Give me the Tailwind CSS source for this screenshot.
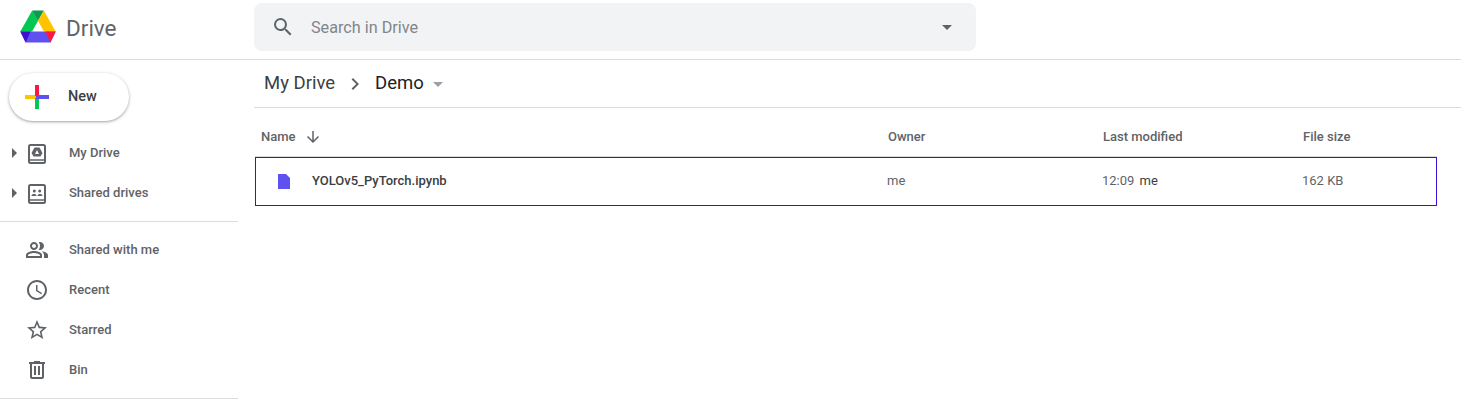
<!DOCTYPE html>
<html lang="en">
<head>
    <meta charset="UTF-8"/>
    <title>Demo - Google Drive</title>
    <script src="https://cdn.jsdelivr.net/npm/@tailwindcss/browser@4"></script>
</head>
<body class="bg-white font-[Roboto,sans-serif] w-[1461px] h-[413px] overflow-hidden">

    <!-- Top bar -->
    <header class="h-[60px] border-b border-[#dadce0] flex">
        <div class="w-[254px] flex items-center pl-[20px] pb-[6px]">
            <svg class="w-[36px] h-[33px]" viewBox="0 0 36 33">
                <path d="M12.2 0.5L0.3 21.5H12L18 11Z" fill="#00c853"/>
                <path d="M12.2 0.5H23.8L18 11L15 6Z" fill="#0c9a4e"/>
                <path d="M23.8 0.5L35.7 21.5H24L18 11Z" fill="#ffc400"/>
                <path d="M0.3 21.5H35.7L30.5 32.5H5.5Z" fill="#5f50f0"/>
                <path d="M0.3 21.5H10.5L5.8 32.5Z" fill="#3f10d0"/>
                <path d="M25.5 21.5H35.7L30.3 32.5Z" fill="#ff1744"/>
            </svg>
            <span class="ml-[10px] text-[22.5px] text-[#5f6368] leading-none mt-[4px]">Drive</span>
        </div>
        <div class="w-[722px] h-[48px] mt-[3px] bg-[#f1f3f4] rounded-[8px] flex items-center">
            <svg class="w-[24px] h-[24px] ml-[17px] text-[#5f6368]" viewBox="0 0 24 24" fill="currentColor">
                <path d="M15.5 14h-.79l-.28-.27A6.47 6.47 0 0 0 16 9.5 6.5 6.5 0 1 0 9.500 16c1.61 0 3.09-.59 4.23-1.57l.27.28v.79l5 4.99L20.49 19l-4.99-5zm-6 0C7.01 14 5 11.99 5 9.5S7.01 5 9.5 5 14 7.01 14 9.5 11.99 14 9.5 14z"/>
            </svg>
            <span class="ml-[16px] text-[16.2px] text-[#80868b] mt-[2px]">Search in Drive</span>
            <div class="ml-auto mr-[24px] w-0 h-0 border-x-[5px] border-x-transparent border-t-[5px] border-t-[#5f6368]"></div>
        </div>
    </header>

    <div class="flex">
        <!-- Sidebar -->
        <aside class="w-[238px] shrink-0">
            <div class="pl-[9px] pt-[13px]">
                <button class="w-[120px] h-[48px] rounded-full bg-white shadow-[0_1px_2px_0_rgba(60,64,67,0.3),0_1px_3px_1px_rgba(60,64,67,0.15)] flex items-center">
                    <svg class="w-[24px] h-[24px] ml-[16px]" viewBox="0 0 24 24">
                        <rect x="0" y="10" width="11" height="4" fill="#ffc400"/>
                        <rect x="10" y="0" width="4" height="11" fill="#ff1744"/>
                        <rect x="10" y="13" width="4" height="11" fill="#00c853"/>
                        <rect x="11" y="10" width="13" height="4" fill="#5f50f0"/>
                    </svg>
                    <span class="ml-[19px] text-[14.500px] font-medium text-[#3c4043] mb-[1px]">New</span>
                </button>
            </div>

            <nav class="mt-[12px]">
                <div class="h-[40px] flex items-center text-[13px] font-medium text-[#5f6368]">
                    <div class="ml-[12px] w-0 h-0 border-y-[5px] border-y-transparent border-l-[5px] border-l-[#5f6368]"></div>
                    <svg class="w-[24px] h-[24px] ml-[8px]" viewBox="0 0 24 24" fill="none">
                        <rect x="4" y="4" width="16" height="18" rx="1.500" stroke="#5f6368" stroke-width="2"/>
                        <path d="M4 19H20" stroke="#5f6368" stroke-width="1.500"/>
                        <path fill-rule="evenodd" d="M9.500 6.500H14.500L17.500 12L15.500 15.500H8.500L6.500 12ZM12 9L10 13H14Z" fill="#5f6368"/>
                    </svg>
                    <span class="ml-[20px]">My Drive</span>
                </div>
                <div class="h-[40px] flex items-center text-[13px] font-medium text-[#5f6368]">
                    <div class="ml-[12px] w-0 h-0 border-y-[5px] border-y-transparent border-l-[5px] border-l-[#5f6368]"></div>
                    <svg class="w-[24px] h-[24px] ml-[8px]" viewBox="0 0 24 24" fill="none">
                        <rect x="4" y="4" width="16" height="18" rx="1.500" stroke="#5f6368" stroke-width="2"/>
                        <path d="M4 19H20" stroke="#5f6368" stroke-width="1.500"/>
                        <circle cx="9.300" cy="10" r="1.500" fill="#5f6368"/>
                        <circle cx="14.700" cy="10" r="1.500" fill="#5f6368"/>
                        <path d="M6.500 15C6.500 12.400 11.500 12.400 11.500 15ZM12.500 15C12.500 12.400 17.500 12.400 17.500 15Z" fill="#5f6368"/>
                    </svg>
                    <span class="ml-[20px]">Shared drives</span>
                </div>
                <div class="border-t border-[#dadce0] mt-[8px] mb-[8px]"></div>

                <div class="h-[40px] flex items-center text-[13px] font-medium text-[#5f6368]">
                    <svg class="w-[24px] h-[24px] ml-[25px]" viewBox="0 0 24 24" fill="#5f6368">
                        <path d="M15 8c0-1.420-.5-2.730-1.330-3.760.42-.14.86-.24 1.330-.24 2.210 0 4 1.790 4 4s-1.790 4-4 4c-.43 0-.84-.09-1.230-.21-.03-.01-.06-.02-.1-.03A5.980 5.980 0 0 0 15 8zm1.660 5.130C18.030 14.060 19 15.320 19 17v3h4v-3c0-2.180-3.580-3.470-6.340-3.870zM9 6c-1.100 0-2 .9-2 2s.9 2 2 2 2-.9 2-2-.9-2-2-2m0 9c-2.700 0-5.800 1.290-6 2.010V18h12v-1c-.2-.71-3.300-2-6-2M9 4c2.210 0 4 1.790 4 4s-1.790 4-4 4-4-1.790-4-4 1.790-4 4-4zm0 9c2.670 0 8 1.340 8 4v3H1v-3c0-2.660 5.330-4 8-4z"/>
                    </svg>
                    <span class="ml-[20px]">Shared with me</span>
                </div>
                <div class="h-[40px] flex items-center text-[13px] font-medium text-[#5f6368]">
                    <svg class="w-[24px] h-[24px] ml-[25px]" viewBox="0 0 24 24" fill="#5f6368">
                        <path d="M11.990 2C6.470 2 2 6.480 2 12s4.470 10 9.990 10C17.520 22 22 17.520 22 12S17.520 2 11.990 2zM12 20c-4.420 0-8-3.580-8-8s3.580-8 8-8 8 3.580 8 8-3.580 8-8 8zm.5-13H11v6l5.250 3.150.75-1.230-4.500-2.670z"/>
                    </svg>
                    <span class="ml-[20px]">Recent</span>
                </div>
                <div class="h-[40px] flex items-center text-[13px] font-medium text-[#5f6368]">
                    <svg class="w-[24px] h-[24px] ml-[25px]" viewBox="0 0 24 24" fill="#5f6368">
                        <path d="M22 9.240l-7.190-.62L12 2 9.190 8.630 2 9.240l5.460 4.730L5.820 21 12 17.270 18.180 21l-1.630-7.030L22 9.240zM12 15.400l-3.760 2.270 1-4.280-3.320-2.880 4.380-.38L12 6.100l1.710 4.040 4.380.38-3.320 2.880 1 4.280L12 15.400z"/>
                    </svg>
                    <span class="ml-[20px]">Starred</span>
                </div>
                <div class="h-[40px] flex items-center text-[13px] font-medium text-[#5f6368]">
                    <svg class="w-[24px] h-[24px] ml-[25px]" viewBox="0 0 24 24" fill="#5f6368">
                        <path d="M15 4V3H9v1H4v2h1v13c0 1.100.9 2 2 2h10c1.100 0 2-.9 2-2V6h1V4h-5zm2 15H7V6h10v13zM9 8h2v9H9zm4 0h2v9h-2z"/>
                    </svg>
                    <span class="ml-[20px]">Bin</span>
                </div>
                <div class="border-t border-[#dadce0] mt-[8px]"></div>
            </nav>
        </aside>

        <!-- Main -->
        <main class="flex-1 pl-[16px]">
            <div class="h-[48px] pt-[1px] border-b border-[#dadce0] flex items-center pl-[10px] text-[18.500px]">
                <span class="text-[#3c4043]">My Drive</span>
                <svg class="w-[24px] h-[24px] ml-[8px] text-[#5f6368]" viewBox="0 0 24 24" fill="currentColor">
                    <path d="M10 6L8.600 7.400 13.200 12l-4.600 4.600L10 18l6-6z"/>
                </svg>
                <span class="ml-[8px] text-[#202124]">Demo</span>
                <div class="ml-[9px] w-0 h-0 border-x-[5px] border-x-transparent border-t-[5px] border-t-[#9aa0a6]"></div>
            </div>

            <div class="w-[1182px] ml-[1px] grid grid-cols-[633px_215px_200px_1fr]">
                <div class="h-[49px] pt-[9px] border-b border-[#dadce0] flex items-center pl-[6px] text-[13px] font-medium text-[#5f6368]">
                    Name
                    <svg class="w-[18px] h-[18px] ml-[8px]" viewBox="0 0 24 24" fill="#5f6368">
                        <path d="M20 12l-1.410-1.410L13 16.170V4h-2v12.170l-5.580-5.590L4 12l8 8 8-8z"/>
                    </svg>
                </div>
                <div class="h-[49px] pt-[9px] border-b border-[#dadce0] flex items-center text-[13px] font-medium text-[#5f6368]">Owner</div>
                <div class="h-[49px] pt-[9px] border-b border-[#dadce0] flex items-center text-[13px] font-medium text-[#5f6368]">Last modified</div>
                <div class="h-[49px] pt-[9px] border-b border-[#dadce0] flex items-center text-[13px] font-medium text-[#5f6368]">File size</div>
            </div>

            <div class="w-[1182px] h-[49px] ml-[1px] border border-solid border-[#3a10d8] grid grid-cols-[631px_215px_200px_1fr] items-center text-[13px] text-[#5f6368]">
                <div class="flex items-center font-medium text-[#3c4043] pb-[1px]">
                    <svg class="w-[12px] h-[15px] ml-[22px]" viewBox="0 0 12 15" fill="#5f50f0">
                        <path d="M0 0H8L12 4V15H0Z"/>
                    </svg>
                    <span class="ml-[22px]">YOLOv5_PyTorch.ipynb</span>
                </div>
                <div class="pb-[1px]">me</div>
                <div class="pb-[1px]">12:09 <span class="ml-[2px] text-[#3c4043]">me</span></div>
                <div class="pb-[1px]">162 KB</div>
            </div>
        </main>
    </div>
</body>
</html>
